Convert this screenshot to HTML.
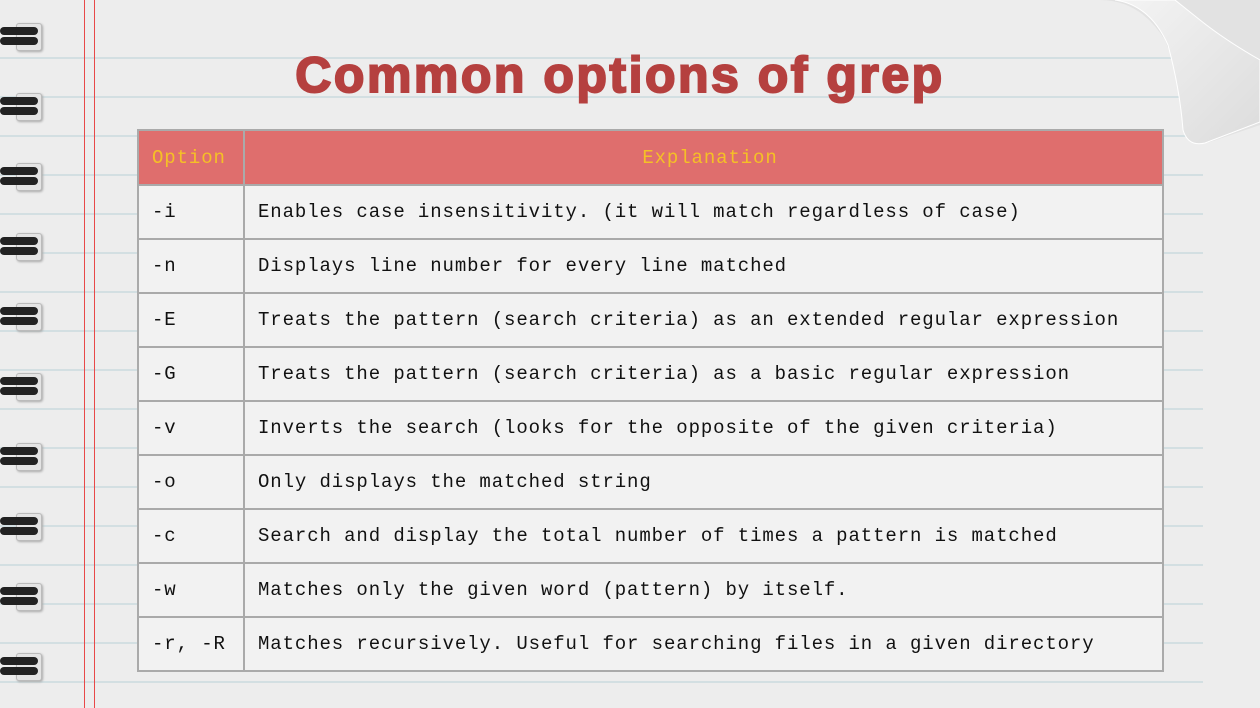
<!DOCTYPE html>
<html><head><style>
body{margin:0;width:1260px;height:708px;overflow:hidden;background:#ededed;position:relative;font-family:"Liberation Mono",monospace}
.line{position:absolute;left:0;width:1203px;height:2px;background:#d3dfe2}
.m{position:absolute;top:0;height:708px;width:1px;background:#e84848}
.ring{position:absolute;left:0;width:42px;height:26px}
.ring .b{position:absolute;right:0;top:0;width:24px;height:26px;background:#e4e4e4;border:1px solid #bbb;border-radius:3px;box-shadow:1px 1px 2px #aaa}
.ring .w{position:absolute;left:0;height:8px;width:38px;background:#222;border-radius:4px}
h1{position:absolute;top:46px;left:0;width:1240px;text-align:center;margin:0;font-family:"Liberation Sans",sans-serif;font-weight:900;font-size:50px;letter-spacing:2.5px;color:#b5403f;-webkit-text-stroke:2px #b5403f}
table{position:absolute;left:137px;top:129px;width:1027px;border-collapse:collapse;font-size:19px;letter-spacing:0.9px}
td,th{border:2px solid #aaa;height:52px;box-sizing:border-box;padding:0 0 0 13px;text-align:left;background:#f2f2f2;color:#111;white-space:nowrap}
td{height:54px}
th{background:#df6e6d;color:#f5c026;font-weight:normal;height:55px}
th:last-child{text-align:center}
.curl{position:absolute;right:0;top:0}
</style></head><body>
<div class="line" style="top:57px"></div><div class="line" style="top:96px"></div><div class="line" style="top:135px"></div><div class="line" style="top:174px"></div><div class="line" style="top:213px"></div><div class="line" style="top:252px"></div><div class="line" style="top:291px"></div><div class="line" style="top:330px"></div><div class="line" style="top:369px"></div><div class="line" style="top:408px"></div><div class="line" style="top:447px"></div><div class="line" style="top:486px"></div><div class="line" style="top:525px"></div><div class="line" style="top:564px"></div><div class="line" style="top:603px"></div><div class="line" style="top:642px"></div><div class="line" style="top:681px"></div>
<div class="m" style="left:84px"></div><div class="m" style="left:94px"></div>
<div class="ring" style="top:23px"><div class="b"></div><div class="w" style="top:4px"></div><div class="w" style="top:14px"></div></div>
<div class="ring" style="top:93px"><div class="b"></div><div class="w" style="top:4px"></div><div class="w" style="top:14px"></div></div>
<div class="ring" style="top:163px"><div class="b"></div><div class="w" style="top:4px"></div><div class="w" style="top:14px"></div></div>
<div class="ring" style="top:233px"><div class="b"></div><div class="w" style="top:4px"></div><div class="w" style="top:14px"></div></div>
<div class="ring" style="top:303px"><div class="b"></div><div class="w" style="top:4px"></div><div class="w" style="top:14px"></div></div>
<div class="ring" style="top:373px"><div class="b"></div><div class="w" style="top:4px"></div><div class="w" style="top:14px"></div></div>
<div class="ring" style="top:443px"><div class="b"></div><div class="w" style="top:4px"></div><div class="w" style="top:14px"></div></div>
<div class="ring" style="top:513px"><div class="b"></div><div class="w" style="top:4px"></div><div class="w" style="top:14px"></div></div>
<div class="ring" style="top:583px"><div class="b"></div><div class="w" style="top:4px"></div><div class="w" style="top:14px"></div></div>
<div class="ring" style="top:653px"><div class="b"></div><div class="w" style="top:4px"></div><div class="w" style="top:14px"></div></div>
<svg class="curl" width="260" height="160" viewBox="0 0 260 160">
<defs><linearGradient id="g" x1="0" y1="0" x2="1" y2="1"><stop offset="0" stop-color="#f4f4f4"/><stop offset="1" stop-color="#dcdcdc"/></linearGradient></defs>
<path d="M100 0 Q140 0 165 40 Q185 90 185 130 Q190 148 210 142 L260 125 L260 0 Z" fill="#d8d8d8" opacity=".5"/>
<path d="M115 0 Q150 5 168 45 Q180 90 183 130 Q188 147 205 143 L260 122 L260 60 Q225 40 200 20 L175 0 Z" fill="url(#g)" stroke="#fff" stroke-width="1"/>
</svg>
<h1>Common options of grep</h1>
<table>
<tr><th style="width:106px">Option</th><th>Explanation</th></tr>
<tr><td>-i</td><td>Enables case insensitivity. (it will match regardless of case)</td></tr>
<tr><td>-n</td><td>Displays line number for every line matched</td></tr>
<tr><td>-E</td><td>Treats the pattern (search criteria) as an extended regular expression</td></tr>
<tr><td>-G</td><td>Treats the pattern (search criteria) as a basic regular expression</td></tr>
<tr><td>-v</td><td>Inverts the search (looks for the opposite of the given criteria)</td></tr>
<tr><td>-o</td><td>Only displays the matched string</td></tr>
<tr><td>-c</td><td>Search and display the total number of times a pattern is matched</td></tr>
<tr><td>-w</td><td>Matches only the given word (pattern) by itself.</td></tr>
<tr><td>-r, -R</td><td>Matches recursively. Useful for searching files in a given directory</td></tr>
</table>
</body></html>
